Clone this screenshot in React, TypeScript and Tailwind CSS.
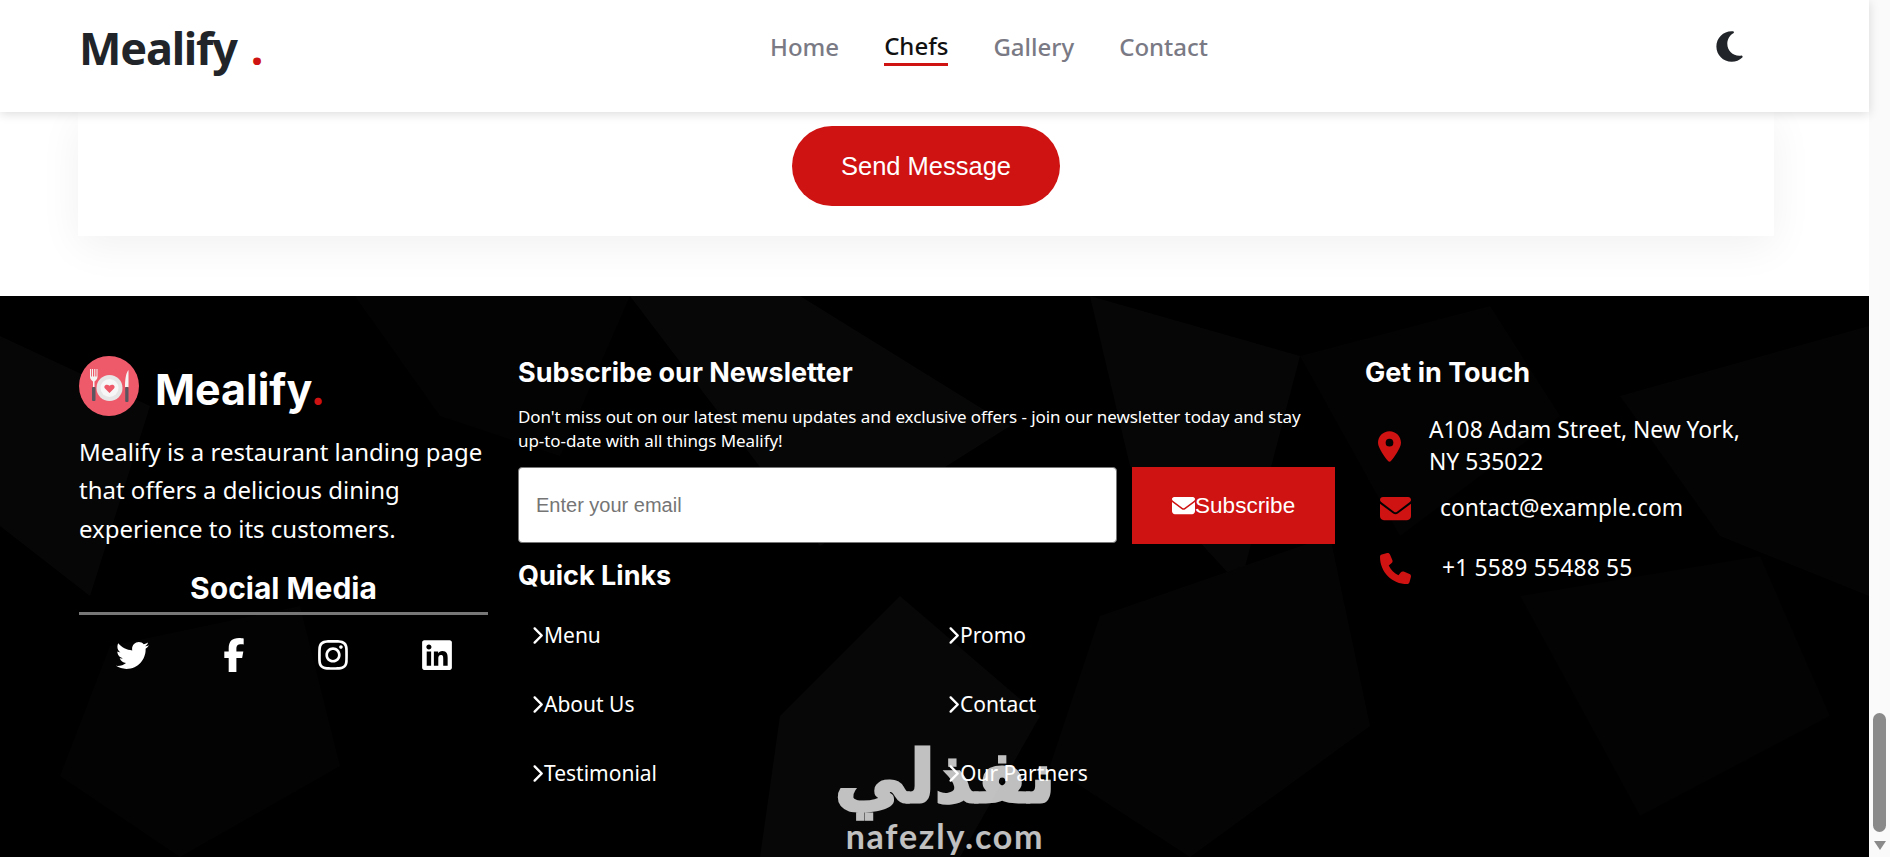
import {
  FaChevronRight,
  FaEnvelope,
  FaFacebookF,
  FaInstagram,
  FaLinkedin,
  FaLocationDot,
  FaMoon,
  FaPhone,
  FaTwitter,
} from "react-icons/fa6";

const body = "font-['Noto_Sans','Open_Sans',sans-serif]";
const heading = "font-['Inter','Liberation_Sans',sans-serif]";
const arial = "font-['Liberation_Sans',Arial,sans-serif]";

const links = [
  ["Menu", "Promo"],
  ["About Us", "Contact"],
  ["Testimonial", "Our Partners"],
];

function PlateLogo() {
  return (
    <svg viewBox="0 0 60 60" className="h-[60px] w-[60px] shrink-0">
      <circle cx="30" cy="30" r="30" fill="#ef5a6b" />
      <circle cx="30.500" cy="32" r="13" fill="#e6e6e6" />
      <circle cx="30.500" cy="32" r="9" fill="#f7f7f7" />
      <path d="M30.500 37l-4.500-4.500c-2.200-2.700 1.700-5.400 4.500-2.700 2.800-2.700 6.700 0 4.500 2.700z" fill="#ef5a6b" />
      <path d="M11 13v8c0 2.500 2 3.500 3 4.500V31h1.500v-5.500c1-1 3-2 3-4.500v-8h-1v7.500h-1.200V13h-1.100v7.500H14V13h-1.100v7.500h-.9V13z" fill="#f4f4f4" />
      <rect x="13" y="31" width="3.500" height="14" rx="1" fill="#5b5560" />
      <path d="M49.500 14c-3 3.500-3.500 11-3.500 17h3.500z" fill="#f4f4f4" />
      <rect x="46.200" y="31" width="3.300" height="15" rx="1" fill="#5b5560" />
    </svg>
  );
}

function FooterTexture() {
  return (
    <svg
      viewBox="0 0 1869 561"
      preserveAspectRatio="none"
      className="absolute inset-0 h-full w-full opacity-60"
    >
      <path d="M0 40L150 110 90 300 0 230z" fill="#0b0b0b" />
      <path d="M355 0L630 0 560 160 440 120z" fill="#060606" />
      <path d="M630 0L800 0 1010 130 820 250z" fill="#0d0d0d" />
      <path d="M1090 0L1300 60 1240 290 1130 170z" fill="#0b0b0b" />
      <path d="M1300 60L1490 10 1560 120 1400 240z" fill="#060606" />
      <path d="M1100 320L1330 240 1370 430 1190 561 1050 470z" fill="#080808" />
      <path d="M900 300L1040 420 960 561 760 561 780 420z" fill="#0c0c0c" />
      <path d="M110 350L300 310 340 470 180 561 60 480z" fill="#060606" />
      <path d="M1620 100L1869 30 1869 300 1720 240z" fill="#080808" />
      <path d="M1520 300L1760 260 1830 420 1640 520z" fill="#050505" />
    </svg>
  );
}

export default function App() {
  return (
    <div className={`flex h-[857px] overflow-hidden bg-white ${body}`}>
      <div className="flex h-full w-[1869px] shrink-0 flex-col">
        <header className="relative z-10 flex h-[112px] shrink-0 items-center bg-white pb-[18px] pl-[79px] pr-[122px] shadow-[0_2px_10px_rgba(0,0,0,0.14)]">
          <div className="w-[691px] text-[45px] font-bold leading-none tracking-[-1.200px] text-[#212529]">
            Mealify<span className="ml-[14px] text-[#cf1212]">.</span>
          </div>
          <nav className="flex items-center gap-[45px] text-[24px] font-medium leading-[34px] text-[#7a7a85]">
            <a>Home</a>
            <a className="border-b-[3px] border-[#cf1212] text-[#111]">Chefs</a>
            <a>Gallery</a>
            <a>Contact</a>
          </nav>
          <FaMoon className="ml-auto h-[35px] w-[35px] -translate-y-[1px] text-[#212529]" />
        </header>

        <section className="h-[184px] shrink-0 pl-[78px] pr-[95px]">
          <div className="flex h-[124px] justify-center bg-white pt-[14px] shadow-[0_10px_40px_rgba(0,0,0,0.06)]">
            <button
              className={`h-[80px] w-[268px] rounded-[40px] bg-[#cf1212] text-[25.500px] text-white ${arial}`}
            >
              Send Message
            </button>
          </div>
        </section>

        <footer className="relative flex-1 overflow-hidden bg-black text-white">
          <FooterTexture />
          <div className="relative flex gap-[30px] pl-[79px] pt-[60px]">
            <div className="w-[409px] shrink-0">
              <div className="flex items-center gap-[16px]">
                <PlateLogo />
                <div className={`translate-y-[3px] text-[43px] font-bold leading-none ${heading}`}>
                  Mealify<span className="text-[#cf1212]">.</span>
                </div>
              </div>
              <p className="mt-[17px] text-[24px] leading-[38.4px]">
                Mealify is a restaurant landing page that offers a delicious dining experience to its customers.
              </p>
              <h3 className={`mt-[23px] text-center text-[30px] font-bold leading-[34px] ${heading}`}>
                Social Media
              </h3>
              <div className="mt-[7px] h-[3px] bg-[#777]" />
              <div className="mt-[23px] flex h-[34px] items-center text-[33px]">
                <FaTwitter className="ml-[37px] h-[33px] w-[33px]" />
                <FaFacebookF className="ml-[68px] h-[34px] w-[34px]" />
                <FaInstagram className="ml-[65px] h-[34px] w-[34px]" />
                <FaLinkedin className="ml-[70px] h-[34px] w-[34px]" />
              </div>
            </div>

            <div className="w-[817px] shrink-0">
              <h3 className={`translate-y-[1px] text-[27px] font-bold leading-[32px] ${heading}`}>
                Subscribe our Newsletter
              </h3>
              <p className="mt-[17px] w-[795px] text-[17px] leading-[24px] tracking-[-0.070px]">
                Don't miss out on our latest menu updates and exclusive offers - join our newsletter today and stay up-to-date with all things Mealify!
              </p>
              <div className="mt-[14px] flex gap-[15px]">
                <input
                  placeholder="Enter your email"
                  className={`h-[76px] w-[600px] rounded-[4px] border border-[#777] bg-white px-[17px] text-[20px] text-black placeholder:text-[#757575] ${arial}`}
                />
                <button
                  className={`flex h-[77px] w-[203px] items-center justify-center bg-[#cf1212] text-[22.500px] text-white ${arial}`}
                >
                  <FaEnvelope className="h-[23px] w-[23px]" />
                  Subscribe
                </button>
              </div>
              <h3 className={`mt-[16px] text-[27px] font-bold leading-[32px] ${heading}`}>
                Quick Links
              </h3>
              <div className="mt-[26px] flex flex-col gap-[35px] pl-[12px] text-[21px] leading-[34px]">
                {links.map((row) => (
                  <div key={row[0]} className="grid grid-cols-[416px_1fr]">
                    {row.map((label) => (
                      <a key={label} className="flex items-center">
                        <FaChevronRight className="h-[19px] w-[14px] shrink-0" />
                        {label}
                      </a>
                    ))}
                  </div>
                ))}
              </div>
            </div>

            <div className="w-[400px] shrink-0">
              <h3 className={`translate-y-[1px] text-[27px] font-bold leading-[32px] ${heading}`}>
                Get in Touch
              </h3>
              <div className="mt-[26px] flex items-center pl-[13px] text-[22.800px] leading-[32px]">
                <FaLocationDot className="h-[31px] w-[23px] shrink-0 text-[#cf1212]" />
                <span className="ml-[28px] w-[330px]">A108 Adam Street, New York, NY 535022</span>
              </div>
              <div className="mt-[14px] flex items-center pl-[15px] text-[22.800px] leading-[32px]">
                <FaEnvelope className="h-[31px] w-[31px] shrink-0 text-[#cf1212]" />
                <span className="ml-[29px]">contact@example.com</span>
              </div>
              <div className="mt-[28px] flex items-center pl-[15px] text-[22.800px] leading-[32px]">
                <FaPhone className="h-[31px] w-[31px] shrink-0 text-[#cf1212]" />
                <span className="ml-[31px] tracking-[0.200px]">+1 5589 55488 55</span>
              </div>
            </div>
          </div>

          {/* watermark sits over the last row of links, the white text shows through it */}
          <div className="pointer-events-none absolute left-[835px] top-[437px] flex w-[220px] flex-col items-center text-white opacity-75">
            <span
              className="font-['DejaVu_Sans',sans-serif] text-[72px] font-bold leading-[88px] [-webkit-text-stroke:3px_#ffffff]"
              dir="rtl"
            >
              نفذلي
            </span>
            <span className="font-['Lato',sans-serif] text-[34px] font-bold leading-[30px] tracking-[1.800px]">
              nafezly.com
            </span>
          </div>
        </footer>
      </div>

      <aside className="flex w-[21px] shrink-0 flex-col items-center bg-[#fafafa]">
        <div className="mt-[713px] h-[119px] w-[13px] rounded-full bg-[#8a8a8a]" />
        <div className="mt-[9px] h-0 w-0 border-x-[6px] border-t-[9px] border-x-transparent border-t-[#8a8a8a]" />
      </aside>
    </div>
  );
}
